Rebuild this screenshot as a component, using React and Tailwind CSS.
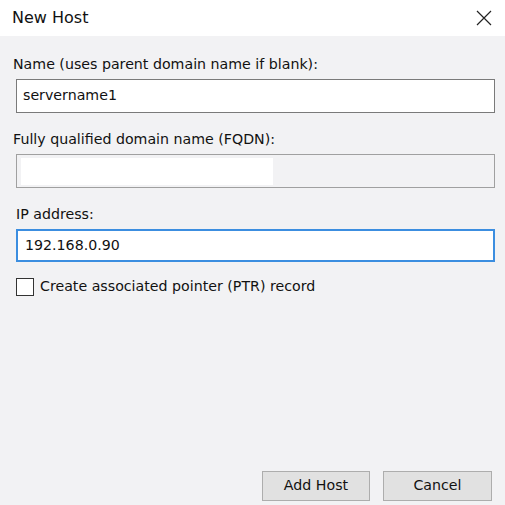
import React from 'react';

const font = { fontFamily: '"DejaVu Sans", "Noto Sans", sans-serif' };

export default function App() {
  return (
    <div className="w-[505px] h-[505px] bg-[#f2f2f4] flex flex-col text-[#111] overflow-hidden" style={font}>
      {/* title bar */}
      <div className="h-[36px] bg-white flex items-center justify-between pl-[12px] pr-[10px] shrink-0">
        <span className="text-[16px]">New Host</span>
        <svg width="16" height="16" viewBox="0 0 16 16" className="mr-[3px]">
          <path d="M1 1 L15 15 M15 1 L1 15" stroke="#222" strokeWidth="1.2" />
        </svg>
      </div>

      <div className="flex flex-col pl-[16px] pr-[10px] pt-[18px] flex-1">
        <label className="text-[14.2px] leading-[20px] -ml-[3px]">Name (uses parent domain name if blank):</label>
        <div className="mt-[5px] h-[34px] w-[479px] bg-white border border-[#7a7a7a] flex items-center px-[6px] text-[14.2px]">
          servername1
        </div>

        <label className="mt-[16px] text-[14.2px] leading-[20px] -ml-[3px]">Fully qualified domain name (FQDN):</label>
        <div className="mt-[5px] h-[34px] w-[479px] bg-[#f2f2f4] border border-[#a0a0a0] flex items-center pl-[4px]">
          <div className="w-[252px] h-[27px] bg-white" />
        </div>

        <label className="mt-[16px] text-[14.2px] leading-[20px]">IP address:</label>
        <div className="mt-[5px] h-[33px] w-[479px] bg-white border-2 border-[#3c8ee0] flex items-center px-[7px] text-[14.2px]">
          192.168.0.90
        </div>

        <div className="mt-[14px] flex items-center gap-[6px]">
          <div className="w-[18px] h-[18px] bg-white border border-[#333]" />
          <span className="text-[14.2px]">Create associated pointer (PTR) record</span>
        </div>

        <div className="flex-1" />
        <div className="flex justify-end gap-[13px] pr-[3px] pb-[4px]">
          <button className="w-[108px] h-[30px] bg-[#e1e1e1] border border-[#adadad] text-[14.2px]">Add Host</button>
          <button className="w-[109px] h-[30px] bg-[#e1e1e1] border border-[#adadad] text-[14.2px]">Cancel</button>
        </div>
      </div>
    </div>
  );
}
